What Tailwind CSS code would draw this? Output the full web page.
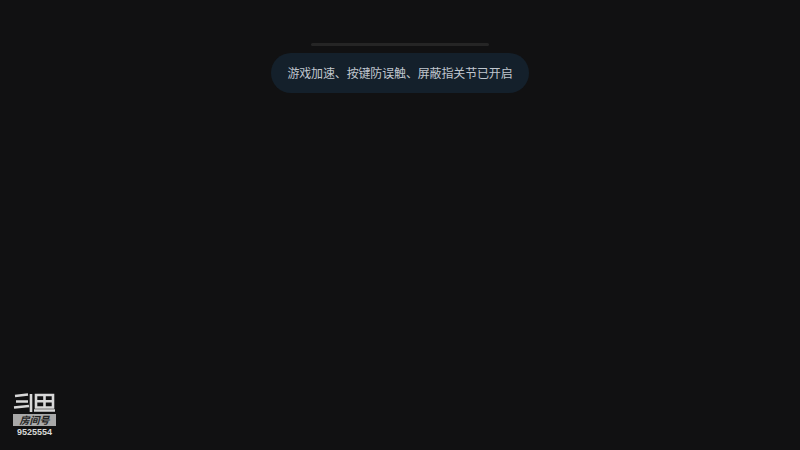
<!DOCTYPE html>
<html lang="zh">
<head>
<meta charset="utf-8">
<script src="https://cdn.jsdelivr.net/npm/@tailwindcss/browser@4"></script>
</head>
<body class="bg-[#111112]">
<div class="relative w-[800px] h-[450px] overflow-hidden bg-[#111112] font-['Noto_Sans_CJK_SC','Noto_Sans',sans-serif]">
  <div class="flex flex-col items-center pt-[43px]">
    <div class="w-[178px] h-[3px] rounded-full bg-[#252525]"></div>
    <div class="mt-[7px] w-[258px] h-[40px] rounded-full bg-[#14202b] flex items-center justify-center">
      <span class="text-[12px] leading-none tracking-[-0.15px] whitespace-nowrap text-[#c0c7cf]">游戏加速、按键防误触、屏蔽指关节已开启</span>
    </div>
  </div>
  <div class="absolute left-[13px] top-[393px] w-[43px] flex flex-col items-center">
    <svg class="block" width="43" height="20" viewBox="0 0 43 20" fill="none" stroke="#d8d8d8" stroke-width="2.6" aria-label="斗鱼">
      <path d="M2 3 L15 1.5 M3 8.5 H15 M1 14.5 L16 13 M18 1 V19"/>
      <path d="M23 2 H40 V14.5 H23 Z M23 8.2 H40 M31.5 2 V14.5 M21 17.5 H42"/>
    </svg>
    <div class="mt-[1px] w-[43px] h-[12px] bg-[#a8a8a8] flex items-center justify-center">
      <span class="text-[10px] leading-none italic font-bold text-[#222]">房间号</span>
    </div>
    <span class="mt-[1px] text-[9px] leading-[10px] font-bold text-[#d8d8d8] font-['Liberation_Sans',sans-serif]">9525554</span>
  </div>
</div>
</body>
</html>
